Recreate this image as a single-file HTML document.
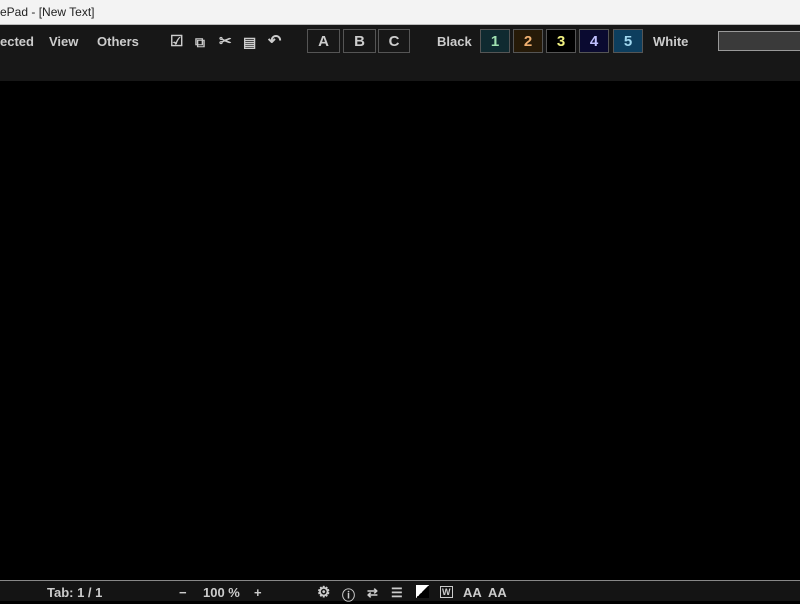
<!DOCTYPE html>
<html><head><style>
body{margin:0;width:800px;height:600px;overflow:hidden;background:#000;font-family:"Liberation Sans",sans-serif;position:relative}
.t{position:absolute;top:0;left:0;width:800px;height:24px;background:#f3f3f3;border-bottom:1px solid #bbb;font-size:12px;color:#222;line-height:24px}
.tb{position:absolute;top:25px;left:0;width:800px;height:56px;background:#171717}
.a{position:absolute;color:#ccc;font-weight:bold;font-size:13px;line-height:24px;top:30px}
.b{position:absolute;top:29px;height:22px;border:1px solid #555;color:#ccc;font-weight:bold;font-size:15px;text-align:center;line-height:23px}
.st{position:absolute;top:580px;left:0;width:800px;height:20px;background:#141414;border-top:1px solid #888}
.s{position:absolute;color:#ccc;font-weight:bold;font-size:13px;top:585px}
</style></head><body>
<div class="t"><span style="position:absolute;left:0">ePad - [New Text]</span></div>
<div class="tb"></div>
<div class="a" style="left:0">ected</div>
<div class="a" style="left:49px">View</div>
<div class="a" style="left:97px">Others</div>
<div class="a" style="left:170px;font-size:15px">☑</div>
<div class="a" style="left:195px;font-size:14px">⧉</div>
<div class="a" style="left:219px;font-size:15px">✂</div>
<div class="a" style="left:243px;font-size:14px">▤</div>
<div class="a" style="left:268px;font-size:16px">↶</div>
<div class="b" style="left:307px;width:31px">A</div>
<div class="b" style="left:343px;width:31px">B</div>
<div class="b" style="left:378px;width:30px">C</div>
<div class="a" style="left:437px">Black</div>
<div class="b" style="left:480px;width:28px;background:#0f2a30;color:#9fe0b0">1</div>
<div class="b" style="left:513px;width:28px;background:#261a08;color:#f0b070">2</div>
<div class="b" style="left:546px;width:28px;background:#000;color:#f0f080">3</div>
<div class="b" style="left:579px;width:28px;background:#0a0a30;color:#c0c0ff">4</div>
<div class="b" style="left:613px;width:28px;background:#0d3e5e;color:#a0d8f0">5</div>
<div class="a" style="left:653px">White</div>
<div style="position:absolute;left:718px;top:31px;width:90px;height:18px;border:1px solid #999;background:#3a3a3a"></div>
<div class="st"></div>
<div class="s" style="left:47px">Tab: 1 / 1</div>
<div class="s" style="left:179px">−</div>
<div class="s" style="left:203px">100 %</div>
<div class="s" style="left:254px">+</div>
<div class="s" style="left:317px;font-size:15px;top:583px">⚙</div>
<div class="s" style="left:342px">ⓘ</div>
<div class="s" style="left:367px">⇄</div>
<div class="s" style="left:391px">☰</div>
<div style="position:absolute;left:416px;top:585px;width:13px;height:13px;background:linear-gradient(135deg,#fff 50%,#000 50%)"></div>
<div class="s" style="left:440px;font-size:9px;border:1px solid #ccc;padding:0 1px;top:586px">W</div>
<div class="s" style="left:463px">AA</div>
<div class="s" style="left:488px">AA</div>
</body></html>
